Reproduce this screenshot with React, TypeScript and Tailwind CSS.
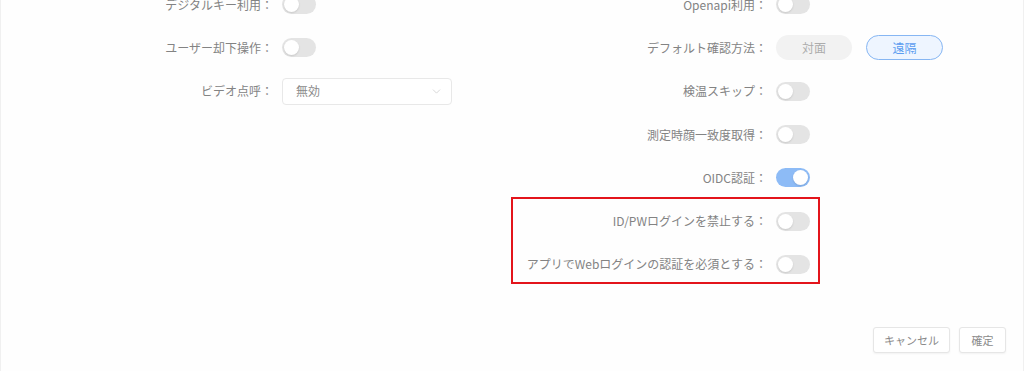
import React from "react";
import { ChevronDown } from "lucide-react";

const font = { fontFamily: '"Noto Sans CJK JP", "Noto Sans", sans-serif' };

const Toggle = ({ on = false }: { on?: boolean }) => (
  <div
    className={`flex h-[19px] w-[34px] items-center rounded-full px-[2px] ${
      on ? "justify-end bg-[#8dbbf6]" : "justify-start bg-[#e4e4e4]"
    }`}
  >
    <div className="h-[15px] w-[15px] rounded-full bg-white shadow-[0_1px_2px_rgba(0,0,0,0.12)]" />
  </div>
);

const Row = ({ label, children }: { label: string; children: React.ReactNode }) => (
  <div className="flex h-[43.3px] items-center">
    <div className="w-[272px] shrink-0 text-right text-[12px] text-[#838383]">{label}</div>
    <div className="ml-[9px] flex items-center">{children}</div>
  </div>
);

export default function App() {
  return (
    <div
      className="relative h-[371px] w-[1024px] overflow-hidden border-x border-[#f0f0f0] bg-[#fefefe]"
      style={font}
    >
      <div className="mt-[-17px] grid grid-cols-[494px_1fr]">
        {/* left column */}
        <div>
          <Row label="デジタルキー利用：">
            <Toggle />
          </Row>
          <Row label="ユーザー却下操作：">
            <Toggle />
          </Row>
          <Row label="ビデオ点呼：">
            <div className="flex h-[27px] w-[170px] items-center justify-between rounded-[4px] border border-[#e8e8e8] bg-white pl-[13px] pr-[8px] text-[12px] text-[#8a8a8a]">
              <span>無効</span>
              <ChevronDown size={13} strokeWidth={1.5} color="#cfcfcf" />
            </div>
          </Row>
        </div>

        {/* right column */}
        <div>
          <Row label="Openapi利用：">
            <Toggle />
          </Row>
          <Row label="デフォルト確認方法：">
            <div className="flex items-center gap-[14px] text-[12px]">
              <div className="flex h-[25px] w-[76px] items-center justify-center rounded-full bg-[#f2f2f2] text-[#acacac]">
                対面
              </div>
              <div className="flex h-[25px] w-[77px] items-center justify-center rounded-full border border-[#86b6f3] bg-[#eef5ff] text-[#5d9df0]">
                遠隔
              </div>
            </div>
          </Row>
          <Row label="検温スキップ：">
            <Toggle />
          </Row>
          <Row label="測定時顔一致度取得：">
            <Toggle />
          </Row>
          <Row label="OIDC認証：">
            <Toggle on />
          </Row>
          <Row label="ID/PWログインを禁止する：">
            <Toggle />
          </Row>
          <Row label="アプリでWebログインの認証を必須とする：">
            <Toggle />
          </Row>
        </div>
      </div>

      <div className="mt-[41px] flex justify-end gap-[9px] pr-[17px] text-[11px] text-[#8a8a8a]">
        <button className="h-[26px] w-[77px] rounded-[3px] border border-[#e6e6e6] bg-white shadow-[0_1px_2px_rgba(0,0,0,0.05)]">
          キャンセル
        </button>
        <button className="h-[26px] w-[47px] rounded-[3px] border border-[#e6e6e6] bg-white shadow-[0_1px_2px_rgba(0,0,0,0.05)]">
          確定
        </button>
      </div>

      {/* highlight annotation */}
      <div className="pointer-events-none absolute left-[510px] top-[197px] h-[87px] w-[309px] border-2 border-[#e3141b]" />
    </div>
  );
}
